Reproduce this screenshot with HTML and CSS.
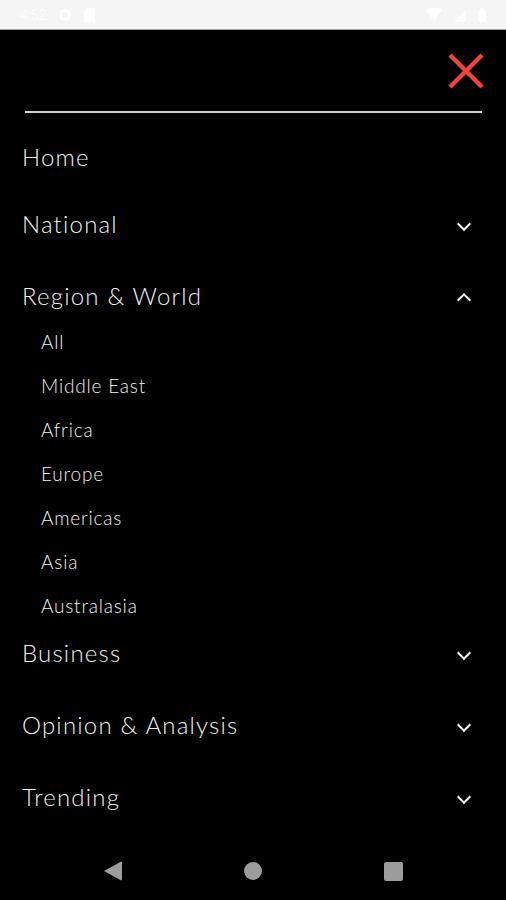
FILE: index.html
```html
<!DOCTYPE html>
<html lang="en">
<head>
<meta charset="UTF-8">
<title>Menu</title>
<link rel="stylesheet" href="styles.css">
</head>
<body>
<div class="statusbar">
  <div class="status-left">
    <span class="clock">4:52</span>
    <svg width="14" height="14" viewBox="0 0 14 14"><circle cx="7" cy="7" r="4.5" fill="none" stroke="#fff" stroke-width="3"/></svg>
    <svg width="11" height="14" viewBox="0 0 11 14"><path d="M3 0h8v14H0V3z" fill="#fff"/></svg>
  </div>
  <div class="status-right">
    <svg width="16" height="14" viewBox="0 0 16 14"><path d="M0 2q8-5 16 0L8 13z" fill="#fff"/></svg>
    <svg width="12" height="14" viewBox="0 0 12 14"><path d="M12 1v13H0z" fill="#fff"/></svg>
    <svg width="8" height="14" viewBox="0 0 8 14"><path d="M2 0h4v1.5h2V14H0V1.5h2z" fill="#fff"/></svg>
  </div>
</div>

<div class="drawer">
  <div class="drawer-top">
    <button class="close" aria-label="Close">
      <svg width="36" height="36" viewBox="0 0 36 36"><path d="M2 2L34 34M34 2L2 34" stroke="#f44336" stroke-width="4.5" stroke-linecap="butt"/></svg>
    </button>
  </div>
  <div class="divider"></div>

  <ul class="menu">
    <li class="item home"><div class="row"><span class="label">Home</span></div></li>
    <li class="item">
      <div class="row"><span class="label">National</span><span class="toggle down"></span></div>
    </li>
    <li class="item open">
      <div class="row"><span class="label">Region &amp; World</span><span class="toggle up"></span></div>
      <ul class="sub">
        <li>All</li>
        <li>Middle East</li>
        <li>Africa</li>
        <li>Europe</li>
        <li>Americas</li>
        <li>Asia</li>
        <li>Australasia</li>
      </ul>
    </li>
    <li class="item">
      <div class="row"><span class="label">Business</span><span class="toggle down"></span></div>
    </li>
    <li class="item">
      <div class="row"><span class="label">Opinion &amp; Analysis</span><span class="toggle down"></span></div>
    </li>
    <li class="item">
      <div class="row"><span class="label">Trending</span><span class="toggle down"></span></div>
    </li>
  </ul>
</div>

<div class="navbar">
  <span class="nav-back"></span>
  <span class="nav-home"></span>
  <span class="nav-recent"></span>
</div>
</body>
</html>
```

FILE: styles.css
```css
html,body{margin:0;padding:0;}
body{
  width:506px;height:900px;
  background:#000;color:#f0f0f0;
  font-family:'Lato','Noto Sans',sans-serif;
  font-weight:300;
  display:flex;flex-direction:column;
  overflow:hidden;
}

/* status bar */
.statusbar{
  height:29px;
  background:#f5f5f5;
  border-bottom:1px solid #a8a8a8;
  display:flex;justify-content:space-between;align-items:center;
  padding:0 20px;
}
.status-left,.status-right{display:flex;align-items:center;gap:12px;}
.clock{font-family:'Roboto',sans-serif;font-size:14px;color:#fff;}

/* drawer */
.drawer{flex:1;}
.drawer-top{display:flex;justify-content:flex-end;padding:23px 22px 0 0;}
.close{
  width:36px;height:36px;padding:0;border:none;background:none;
  display:flex;
}
.divider{height:2px;background:#cfcfcf;margin:22px 24px 0 25px;}

.menu{list-style:none;margin:0;padding:24px 18px 0 22px;}
.item + .item{margin-top:24px;}
.item.open + .item{margin-top:0;}
.row{
  height:48px;
  display:flex;align-items:center;justify-content:space-between;
}
.home .row{height:38px;}
.label{font-size:24px;letter-spacing:1.2px;}

.toggle{
  width:48px;height:48px;
  display:flex;align-items:center;justify-content:center;
}
.toggle::before{
  content:'';
  width:8px;height:8px;
  border-right:2.5px solid #fff;border-bottom:2.5px solid #fff;
}
.toggle.down::before{transform:translateY(1px) rotate(45deg);}
.toggle.up::before{transform:translateY(5px) rotate(-135deg);}

.sub{list-style:none;margin:0;padding:0 0 0 19px;}
.sub li{height:44px;line-height:44px;font-size:19px;letter-spacing:.8px;}
.sub li:first-child{margin-top:1px;}

/* system nav */
.navbar{
  height:58px;
  display:grid;grid-template-columns:repeat(3,140px);
  justify-content:center;align-items:center;justify-items:center;
}
.nav-back{
  width:0;height:0;
  border-top:10px solid transparent;border-bottom:10px solid transparent;
  border-right:18px solid #9c9c9c;
  border-radius:2px;
}
.nav-home{width:18px;height:18px;border-radius:50%;background:#9c9c9c;}
.nav-recent{width:19px;height:19px;border-radius:2px;background:#9c9c9c;}
```
